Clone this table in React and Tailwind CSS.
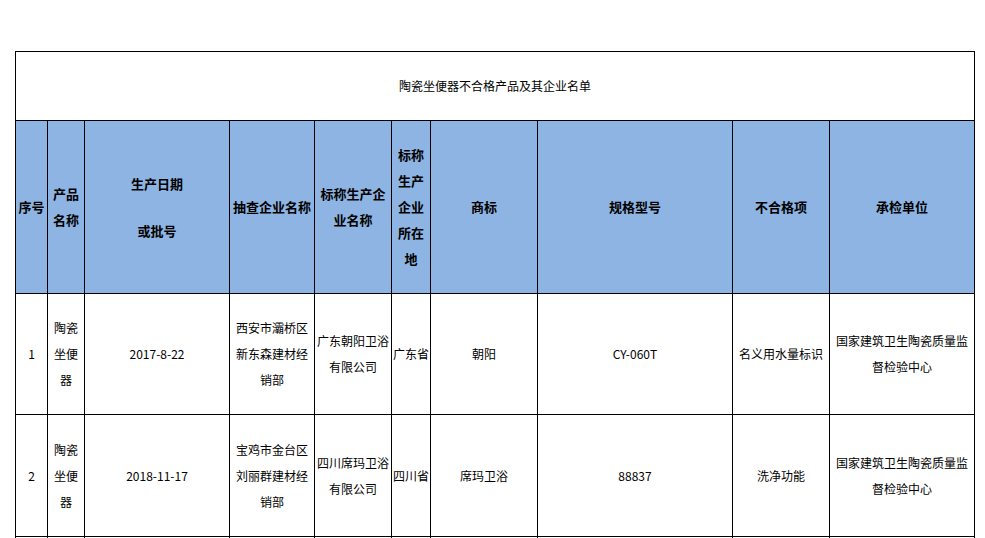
const headers = [
  { lines: ['序号'] },
  { lines: ['产品', '名称'] },
  { lines: ['生产日期', '或批号'], spaced: true },
  { lines: ['抽查企业名称'] },
  { lines: ['标称生产企', '业名称'] },
  { lines: ['标称', '生产', '企业', '所在', '地'] },
  { lines: ['商标'] },
  { lines: ['规格型号'] },
  { lines: ['不合格项'] },
  { lines: ['承检单位'] },
];

const rows = [
  [
    ['1'],
    ['陶瓷', '坐便', '器'],
    ['2017-8-22'],
    ['西安市灞桥区', '新东森建材经', '销部'],
    ['广东朝阳卫浴', '有限公司'],
    ['广东省'],
    ['朝阳'],
    ['CY-060T'],
    ['名义用水量标识'],
    ['国家建筑卫生陶瓷质量监', '督检验中心'],
  ],
  [
    ['2'],
    ['陶瓷', '坐便', '器'],
    ['2018-11-17'],
    ['宝鸡市金台区', '刘丽群建材经', '销部'],
    ['四川席玛卫浴', '有限公司'],
    ['四川省'],
    ['席玛卫浴'],
    ['88837'],
    ['洗净功能'],
    ['国家建筑卫生陶瓷质量监', '督检验中心'],
  ],
];

const App = () => {
  return (
    <div className="h-[538px] w-[985px] overflow-hidden bg-white font-['Noto_Sans_CJK_SC',sans-serif] text-black">
      <div className="ml-[15px] mt-[51px] grid w-[960px] grid-cols-[31px_36px_144px_84px_76px_38px_106px_194px_96px_144px] grid-rows-[68px_172px_120px_121px_120px] gap-px bg-black p-px">
        {/* title */}
        <div className="col-span-10 flex items-center justify-center bg-white text-[12px]">
          陶瓷坐便器不合格产品及其企业名单
        </div>

        {/* header */}
        {headers.map((h, i) => (
          <div
            key={i}
            className={`flex flex-col items-center justify-center bg-[#8db4e2] text-[13px] font-bold leading-[26px] ${h.spaced ? 'gap-[21px]' : ''}`}
          >
            {h.lines.map((l) => (
              <span key={l} className="whitespace-nowrap">{l}</span>
            ))}
          </div>
        ))}

        {/* data rows */}
        {rows.map((row, r) =>
          row.map((cell, c) => (
            <div key={`${r}-${c}`} className="flex flex-col items-center justify-center bg-white text-[12px] leading-[26px]">
              {cell.map((l) => (
                <span key={l} className="whitespace-nowrap">{l}</span>
              ))}
            </div>
          ))
        )}

        {/* next row, cut off by the window */}
        {headers.map((_, i) => (
          <div key={`next-${i}`} className="bg-white" />
        ))}
      </div>
    </div>
  );
};

export default App;
